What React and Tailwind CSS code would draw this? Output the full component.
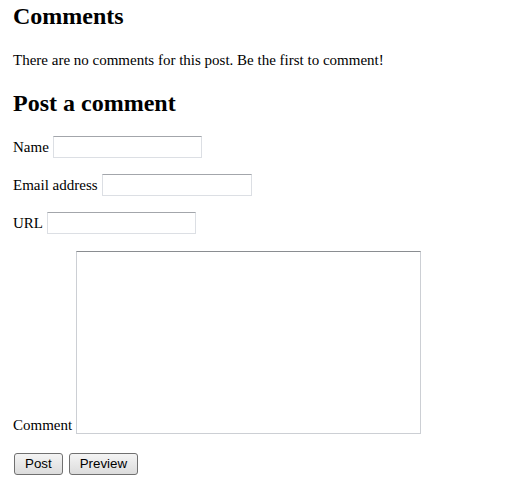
export default function App() {
  const serif = { fontFamily: '"Liberation Serif", "Times New Roman", serif' };
  const inputCls =
    "ml-[4px] h-[22px] w-[149px] border border-[#dcdfe4] border-t-[#a3a6ab] bg-white outline-none";
  const btnCls =
    "h-[22px] rounded-[3px] border border-[#707070] bg-gradient-to-b from-[#f4f4f4] to-[#dcdcdc] px-[10px] text-[13.33px] leading-[18px] text-black";
  return (
    <div className="min-h-[497px] bg-white text-black px-[13px] pt-[2px]" style={serif}>
      <h2 className="text-[24px] font-bold leading-[28px]">Comments</h2>
      <p className="mt-[21px] text-[15px] leading-[18px]">
        There are no comments for this post. Be the first to comment!
      </p>
      <h2 className="mt-[20px] text-[24px] font-bold leading-[28px]">Post a comment</h2>
      <form className="flex flex-col text-[15px] leading-[18px]" onSubmit={(e) => e.preventDefault()}>
        <div className="mt-[19px] flex items-center">
          <label className="whitespace-nowrap">Name</label>
          <input type="text" className={inputCls} />
        </div>
        <div className="mt-[16px] flex items-center">
          <label className="whitespace-nowrap">Email address</label>
          <input type="text" className={inputCls + " w-[150px]"} />
        </div>
        <div className="mt-[16px] flex items-center">
          <label className="whitespace-nowrap">URL</label>
          <input type="text" className={inputCls} />
        </div>
        <div className="mt-[17px] flex items-end">
          <label className="whitespace-nowrap">Comment</label>
          <textarea className="ml-[4px] h-[183px] w-[345px] resize-none border border-[#cccfd4] border-t-[#8a8d91] bg-white outline-none" />
        </div>
        <div className="mt-[19px] ml-[1px] flex gap-[6px]" style={{ fontFamily: '"Liberation Sans", Arial, sans-serif' }}>
          <button type="submit" className={btnCls}>
            Post
          </button>
          <button type="button" className={btnCls}>
            Preview
          </button>
        </div>
      </form>
    </div>
  );
}
